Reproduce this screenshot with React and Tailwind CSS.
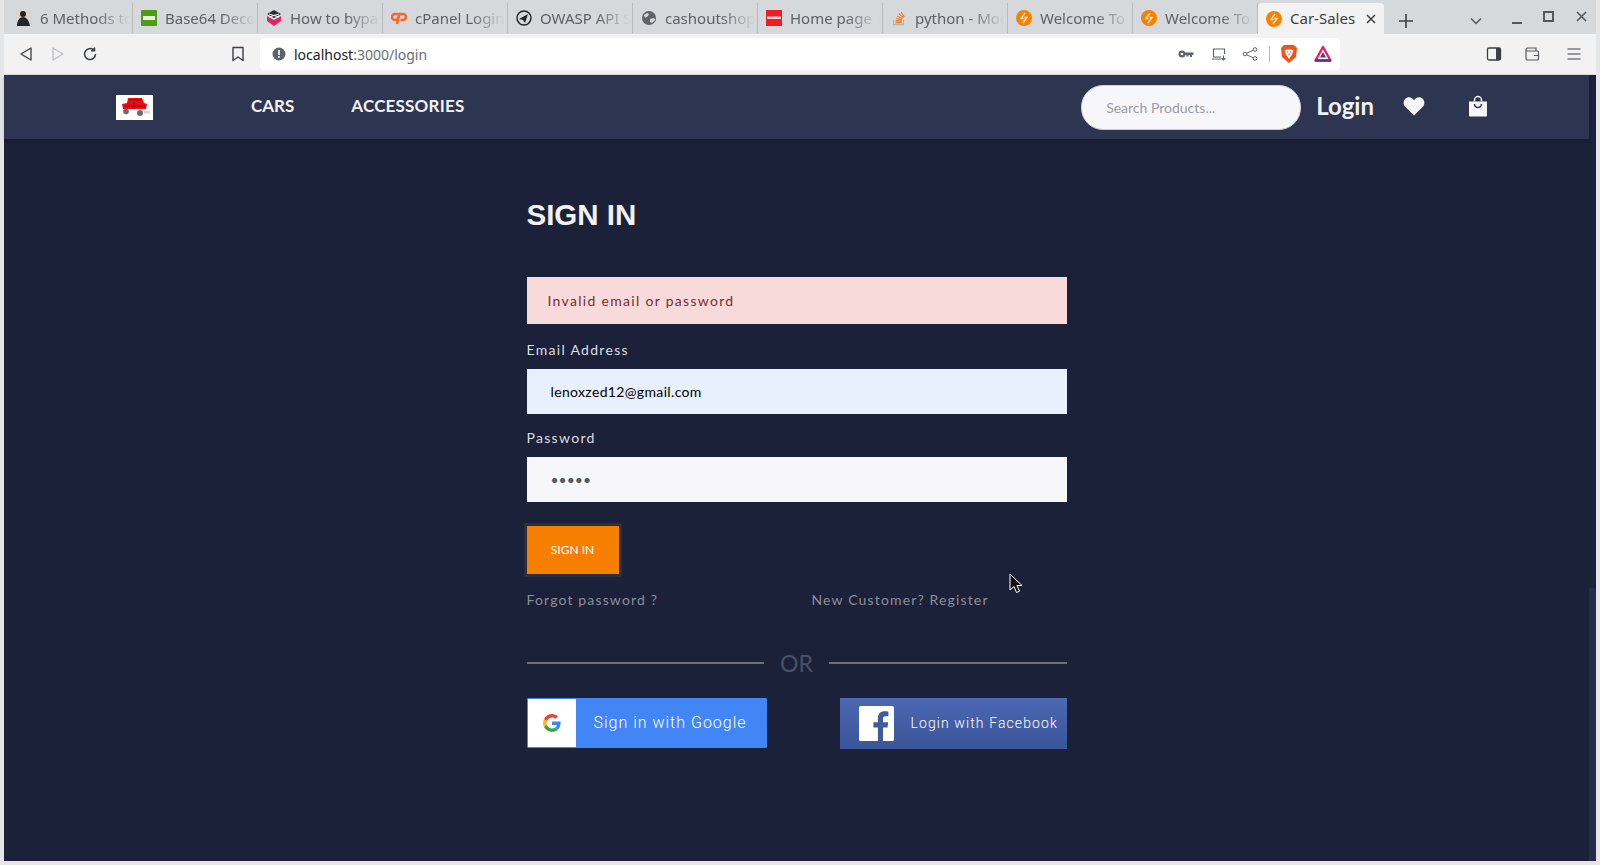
import React from 'react';

const tabs = [
  { title: '6 Methods to Bypass', icon: 'avatar' },
  { title: 'Base64 Decode', icon: 'b64' },
  { title: 'How to bypass', icon: 'cube' },
  { title: 'cPanel Login', icon: 'cpanel' },
  { title: 'OWASP API Sec', icon: 'owasp' },
  { title: 'cashoutshop.', icon: 'globe' },
  { title: 'Home page |', icon: 'home' },
  { title: 'python - Mod', icon: 'so' },
  { title: 'Welcome To C', icon: 'bolt' },
  { title: 'Welcome To C', icon: 'bolt' },
];

const Favicon = ({ type }) => {
  if (type === 'avatar') {
    return (
      <svg width="16" height="16" viewBox="0 0 16 16">
        <rect width="16" height="16" fill="#d8d4d0" />
        <circle cx="7" cy="4" r="3" fill="#2a211d" />
        <path d="M1 16c0-6 3-9 6-9s6 3 7 9z" fill="#23252c" />
      </svg>
    );
  }
  if (type === 'b64') {
    return (
      <svg width="16" height="16" viewBox="0 0 16 16">
        <rect width="16" height="16" rx="1" fill="#4f9a16" />
        <rect x="2" y="6" width="12" height="4" fill="#e8f2d8" />
      </svg>
    );
  }
  if (type === 'cube') {
    return (
      <svg width="16" height="16" viewBox="0 0 16 16">
        <path d="M8 0l7 4-7 4-7-4z" fill="#2b2f38" />
        <path d="M1 6l7 4 7-4v5l-7 5-7-5z" fill="#e0245e" />
        <path d="M3 4l10 3M13 4L3 7" stroke="#fff" strokeWidth="1" />
      </svg>
    );
  }
  if (type === 'cpanel') {
    return (
      <svg width="16" height="16" viewBox="0 0 16 16" fill="none" stroke="#f26a2e" strokeWidth="2.6">
        <path d="M7 4H4a2.500 2.500 0 0 0 0 6h2l1-3" />
        <path d="M6 14l2.500-10H12a2.500 2.500 0 0 1 0 6H9.500" />
      </svg>
    );
  }
  if (type === 'owasp') {
    return (
      <svg width="16" height="16" viewBox="0 0 16 16" fill="none" stroke="#222" strokeWidth="1.4">
        <circle cx="8" cy="8" r="7" />
        <path d="M3 9l9-5-3 9-2-3z" fill="#222" stroke="none" />
      </svg>
    );
  }
  if (type === 'globe') {
    return (
      <svg width="16" height="16" viewBox="0 0 16 16">
        <circle cx="8" cy="8" r="7" fill="#5f6368" />
        <path d="M3 5l3-2 2 1-1 2-3 2zM9 9l4-1 1 2-3 3-2-1z" fill="#d5d9dc" />
      </svg>
    );
  }
  if (type === 'home') {
    return (
      <svg width="16" height="16" viewBox="0 0 16 16">
        <rect width="16" height="16" fill="#ee1c25" />
        <rect x="1" y="6.500" width="14" height="2.500" fill="#fbd8d8" />
      </svg>
    );
  }
  if (type === 'so') {
    return (
      <svg width="16" height="16" viewBox="0 0 16 16" fill="none" strokeWidth="1.3">
        <path d="M2.500 10v4.500h10V10" stroke="#b9b3a9" />
        <path d="M4.500 12.500h6M4.700 10.500l6 .6M5.200 8.300l5.800 1.500M6.200 6l5.300 2.800M8 3.800l4.400 3.900M10 2l3.300 4.800" stroke="#ef8236" />
      </svg>
    );
  }
  return <BoltIcon />;
};

const BoltIcon = () => (
  <svg width="16" height="16" viewBox="0 0 16 16">
    <circle cx="8" cy="8" r="8" fill="#f78200" />
    <path d="M9 3L5 8.500h2.500M7 13l4-5.500H8.500" fill="none" stroke="#fff" strokeWidth="1.300" opacity="0.85" />
  </svg>
);

const Tab = ({ title, icon }) => (
  <div className="relative flex h-[30px] w-[125px] shrink-0 items-center border-r border-[#b6babd] pl-2">
    <div className="w-4 shrink-0 leading-none"><Favicon type={icon} /></div>
    <span className="ml-2 w-[90px] overflow-hidden whitespace-nowrap text-[15px] text-[#5e6166] [mask-image:linear-gradient(to_right,black_62%,transparent_100%)]">{title}</span>
  </div>
);

const Toolbar = () => (
  <div className="flex h-[41px] items-center bg-[#f2f2f2] border-b border-[#dcdcdc]">
    <div className="flex w-[256px] shrink-0 items-center">
      <svg className="ml-[13px]" width="18" height="18" viewBox="0 0 18 18" fill="none" stroke="#3c3f43" strokeWidth="1.300" strokeLinejoin="round"><path d="M14 3v12L4 9z" /></svg>
      <svg className="ml-[14px]" width="18" height="18" viewBox="0 0 18 18" fill="none" stroke="#bcbfc2" strokeWidth="1.300" strokeLinejoin="round"><path d="M4 3v12l10-6z" /></svg>
      <svg className="ml-[14px]" width="18" height="18" viewBox="0 0 18 18" fill="none" stroke="#3c3f43" strokeWidth="1.500"><path d="M14.500 9a5.500 5.500 0 1 1-2-4.200" /><path d="M13.500 2.500v3.300h-3.300" fill="#3c3f43" /></svg>
      <svg className="ml-[131px]" width="16" height="18" viewBox="0 0 16 18" fill="none" stroke="#3c3f43" strokeWidth="1.400" strokeLinejoin="round"><path d="M3 2.500h10v13l-5-3.500-5 3.500z" /></svg>
    </div>
    <div className="flex h-8 w-[1080px] shrink-0 items-center rounded-[4px] bg-white pl-3 pr-2">
      <svg width="14" height="14" viewBox="0 0 14 14"><circle cx="7" cy="7" r="6.500" fill="#5f6368" /><rect x="6.200" y="3" width="1.600" height="5" fill="#fff" /><rect x="6.200" y="9" width="1.600" height="1.800" fill="#fff" /></svg>
      <span className="ml-[8px] font-['Noto_Sans',sans-serif] text-[14px] text-[#202124]">localhost<span className="text-[#6a6d70]">:3000/login</span></span>
      <div className="ml-auto flex items-center">
        <svg width="16" height="16" viewBox="0 0 16 16" fill="#5f6368"><circle cx="4" cy="8" r="3.500" /><path d="M6 6.500h9.500V9H14v2h-2V9h-1.500v1.500h-2V9H6z" /><circle cx="4" cy="8" r="1.300" fill="#fff" /></svg>
        <svg className="ml-[17px]" width="16" height="16" viewBox="0 0 16 16" fill="none" stroke="#5f6368" strokeWidth="1.100"><path d="M10 11H2.500V3h11v5M1 13h9M12.500 9.500v4.500M10.500 12l2 2 2-2" /></svg>
        <svg className="ml-[15px]" width="16" height="16" viewBox="0 0 16 16" fill="none" stroke="#5f6368" strokeWidth="1"><circle cx="13" cy="3.500" r="1.800" /><circle cx="3" cy="8" r="1.800" /><circle cx="13" cy="12.500" r="1.800" /><path d="M4.700 7.200l6.600-3M4.700 8.800l6.600 3" /></svg>
        <div className="ml-[11px] h-[16px] w-px bg-[#b4b6b8]" />
        <svg className="ml-[10px]" width="18" height="20" viewBox="0 0 18 20"><path d="M4 1h10l3 3-1 9-7 6-7-6-1-9z" fill="#f1511b" /><path d="M4.500 6.500L7 5.500h4l2.500 1-1.500 4-3 4.500-3-4.500z" fill="#fff" /><path d="M7 8h1M10 8h1M9 9.500v2" stroke="#f1511b" strokeWidth="1" /></svg>
        <svg className="ml-[16px]" width="18" height="18" viewBox="0 0 18 18"><path d="M9 2L1.500 15.500h15z" fill="none" stroke="#e0245e" strokeWidth="2.400" strokeLinejoin="round" /><path d="M1 15.500h16" stroke="#662d91" strokeWidth="2.400" /><path d="M9 7l-3 5.500h6z" fill="#662d91" /></svg>
      </div>
    </div>
    <div className="ml-[146px] flex items-center">
      <svg width="16" height="16" viewBox="0 0 16 16"><rect x="1.500" y="2" width="13" height="12" rx="1.500" fill="none" stroke="#3c3f43" strokeWidth="1.300" /><rect x="10" y="2" width="4.500" height="12" fill="#3c3f43" /></svg>
      <svg className="ml-[22px]" width="16" height="16" viewBox="0 0 16 16" fill="none" stroke="#55585c" strokeWidth="1.200"><path d="M2 5V3.500A1.500 1.500 0 0 1 3.500 2H12v3M2 5h11.500a1 1 0 0 1 1 1v7a1 1 0 0 1-1 1h-10A1.500 1.500 0 0 1 2 12.500zM10 9.500h4.500" /></svg>
      <svg className="ml-[26px]" width="16" height="16" viewBox="0 0 16 16" stroke="#3c3f43" strokeWidth="1.200"><path d="M1.500 3h13M1.500 8h13M1.500 13h13" /></svg>
    </div>
  </div>
);

const Navbar = () => (
  <nav className="flex h-16 w-[1585px] items-center bg-[#2e3550] shadow-[0_2px_4px_rgba(0,0,0,0.15)]">
    <div className="ml-[112px] flex h-[25px] w-[37px] items-center justify-center bg-white">
      <svg width="30" height="20" viewBox="0 0 30 20">
        <path d="M2 7l5-1 1-5h14l2 5 3 1 -1 5H3z" fill="#ee0a12" />
        <path d="M9 3h12M5 9h20M14 5v6" stroke="#8a1014" strokeWidth="1" />
        <circle cx="6" cy="14.500" r="2.800" fill="#6b6b6b" />
        <circle cx="20" cy="16" r="3" fill="#6b6b6b" />
        <rect x="24" y="14" width="6" height="2.500" fill="#d6d6d6" />
      </svg>
    </div>
    <a className="mb-[2px] ml-[98px] font-['Lato',sans-serif] text-[17px] font-bold text-[#f2f2f4]">CARS</a>
    <a className="mb-[2px] ml-[57px] font-['Lato',sans-serif] text-[17px] font-bold tracking-[0.2px] text-[#f2f2f4]">ACCESSORIES</a>
    <div className="ml-auto flex items-center pr-[101px]">
      <input
        placeholder="Search Products..."
        className="h-[45px] w-[220px] rounded-[22px] border border-[#cfd1d8] bg-[#f7f7f9] pl-[24px] font-['Lato',sans-serif] text-[14px] outline-none placeholder:text-[#9a9ca5]"
      />
      <a className="mb-[2px] ml-[15px] font-['Lato',sans-serif] text-[24px] font-bold text-[#f2f2f4]">Login</a>
      <svg className="mb-[2px] ml-[29px]" width="22" height="20" viewBox="0 0 22 20" fill="#f7f7f9"><path d="M11 19.500L2 10.500C-.5 7.500.5 2.500 4.500 1.500c2.800-.7 5 .6 6.500 3 1.500-2.400 3.700-3.700 6.500-3 4 1 5 6 2.500 9z" /></svg>
      <svg className="mb-[2px] ml-[43px]" width="20" height="22" viewBox="0 0 20 22"><path d="M1 6.500h18v14a1 1 0 0 1-1 1H2a1 1 0 0 1-1-1z" fill="#f7f7f9" /><path d="M6.500 6.500V5a3.500 3.500 0 0 1 7 0v1.500" fill="none" stroke="#f7f7f9" strokeWidth="1.500" /><path d="M6.500 9a3.500 3.500 0 0 0 7 0" fill="none" stroke="#2e3550" strokeWidth="1.500" /></svg>
    </div>
  </nav>
);

const LoginForm = () => (
  <div className="w-[1585px]">
    <div className="mx-auto w-[540px] pt-[54px] font-['Lato',sans-serif]">
      <h1 className="font-['Liberation_Sans',sans-serif] text-[29.5px] leading-[44px] font-bold text-[#f2f2f4]">SIGN IN</h1>
      <div className="mt-[40px] flex h-[47px] items-center bg-[#f8dada] pl-[21px] text-[14px] tracking-[1.3px] text-[#7b2c31]">Invalid email or password</div>

      <label className="mt-[16px] block text-[14px] leading-[20px] tracking-[1.3px] text-[#dcdde2]">Email Address</label>
      <input
        readOnly
        value="lenoxzed12@gmail.com"
        className="mt-[9px] block h-[45px] w-full bg-[#e8f0fe] pl-[24px] text-[14px] tracking-[0.35px] text-black outline-none"
      />

      <label className="mt-[14px] block text-[14px] leading-[20px] tracking-[1.3px] text-[#dcdde2]">Password</label>
      <input
        readOnly
        type="password"
        value="abcde"
        className="mt-[9px] block h-[45px] w-full bg-[#f7f7f9] pl-[24px] text-[14px] text-[#55595c] outline-none"
      />

      <button className="mt-[24px] block h-[48px] w-[92px] bg-[#f77f00] text-[12px] text-white outline-[3px] outline-[#2b2f3c]">SIGN IN</button>

      <div className="mt-[15px] flex h-[20px] items-center text-[14px] tracking-[1.15px] text-[#8c8f9b]">
        <a className="w-[285px]">Forgot password ?</a>
        <a>New Customer? Register</a>
      </div>

      <div className="mt-[38px] flex items-center">
        <div className="h-[2px] flex-1 bg-[#6f7179]" />
        <span className="w-[65px] text-center text-[23px] leading-[32px] text-[#4b5064]">OR</span>
        <div className="h-[2px] flex-1 bg-[#6f7179]" />
      </div>

      <div className="mt-[19px] flex items-start justify-between font-['Roboto',sans-serif]">
        <button className="flex h-[50px] w-[240px] items-center rounded-[1px] bg-[#4285f4] p-px">
          <span className="flex h-[48px] w-[48px] items-center justify-center bg-white">
            <svg width="18" height="18" viewBox="0 0 48 48">
              <path fill="#EA4335" d="M24 9.500c3.500 0 6.700 1.300 9.100 3.500l6.800-6.800C35.800 2.400 30.200 0 24 0 14.600 0 6.500 5.400 2.600 13.200l7.900 6.200C12.400 13.700 17.700 9.500 24 9.500z" />
              <path fill="#4285F4" d="M47 24.500c0-1.600-.1-3.100-.4-4.500H24v9h13c-.6 3-2.200 5.500-4.700 7.200l7.300 5.700C44 37.800 47 31.700 47 24.500z" />
              <path fill="#FBBC05" d="M10.500 28.600c-.5-1.500-.8-3-.8-4.600s.3-3.200.8-4.600l-7.900-6.200C.9 16.500 0 20.100 0 24s.9 7.500 2.600 10.800z" />
              <path fill="#34A853" d="M24 48c6.500 0 11.900-2.100 15.900-5.800l-7.700-6c-2.100 1.400-4.900 2.300-8.200 2.300-6.300 0-11.600-4.200-13.500-9.900l-7.900 6.200C6.500 42.600 14.600 48 24 48z" />
            </svg>
          </span>
          <span className="ml-[18px] text-[16px] font-light tracking-[1px] text-white">Sign in with Google</span>
        </button>
        <button className="flex h-[51px] w-[227px] items-center bg-gradient-to-b from-[#4b68b4] to-[#3b5598]">
          <svg className="ml-[19px]" width="35" height="35" viewBox="0 0 35 35">
            <rect width="35" height="35" rx="1.500" fill="#fff" />
            <path d="M24 35V21.500h4.500l.7-5.300H24v-3.400c0-1.500.5-2.600 2.700-2.600h2.700V5.500c-.5-.1-2.100-.2-3.900-.2-3.900 0-6.600 2.400-6.600 6.800v4.100h-4.500v5.300h4.500V35z" fill="#3f5a9e" />
          </svg>
          <span className="ml-[17px] text-[14px] font-light tracking-[1.1px] text-white">Login with Facebook</span>
        </button>
      </div>
    </div>
  </div>
);

export default function App() {
  return (
    <div className="relative h-[865px] w-[1600px] overflow-hidden bg-[#e4e6e7] pl-1 pr-1 pb-1 font-['Noto_Sans',sans-serif]">
      <div className="flex h-full flex-col">
        {/* browser chrome */}
        <div className="flex h-[34px] items-end bg-[#d5d9dc] pl-1 pb-px">
          {tabs.map((t, i) => <Tab key={i} title={t.title} icon={t.icon} />)}
          <div className="mb-[-1px] flex h-[31px] w-[126px] shrink-0 items-center rounded-t-[4px] bg-[#f2f2f2] pl-2">
            <BoltIcon />
            <span className="ml-2 text-[15px] text-[#3c3f43]">Car-Sales</span>
            <svg className="ml-auto mr-[8px]" width="10" height="10" viewBox="0 0 10 10" stroke="#3c3f43" strokeWidth="1.500"><path d="M1 1l8 8M9 1l-8 8" /></svg>
          </div>
          <svg className="mb-[5px] ml-[15px]" width="14" height="14" viewBox="0 0 14 14" stroke="#3c3f43" strokeWidth="1.600"><path d="M7 0v14M0 7h14" /></svg>
          <svg className="mb-[8px] ml-[57px]" width="12" height="8" viewBox="0 0 12 8" fill="none" stroke="#55585c" strokeWidth="1.500"><path d="M1 1.500l5 5 5-5" /></svg>
          <div className="mb-[9px] ml-[30px] h-[2px] w-[10px] bg-[#55585c]" />
          <div className="mb-[11px] ml-[21px] h-[11px] w-[11px] border-2 border-[#55585c]" />
          <svg className="mb-[11px] ml-[22px]" width="11" height="11" viewBox="0 0 11 11" stroke="#55585c" strokeWidth="1.600"><path d="M1 1l9 9M10 1l-9 9" /></svg>
        </div>
        <Toolbar />
        {/* page */}
        <div className="relative flex-1 bg-[#1b2139]">
          <Navbar />
          <LoginForm />
          {/* scrollbar thumb */}
          <div className="absolute bottom-0 right-0 top-[513px] w-[7px] rounded-t-[2px] bg-[#242c4a]" />
        </div>
      </div>
      {/* mouse pointer */}
      <svg className="absolute left-[1009px] top-[573px]" width="15" height="22" viewBox="0 0 15 22">
        <path d="M1 1v16l4-3.500 2.500 6 3-1.300-2.600-5.700H13z" fill="#111" stroke="#fff" strokeWidth="1" />
      </svg>
    </div>
  );
}
